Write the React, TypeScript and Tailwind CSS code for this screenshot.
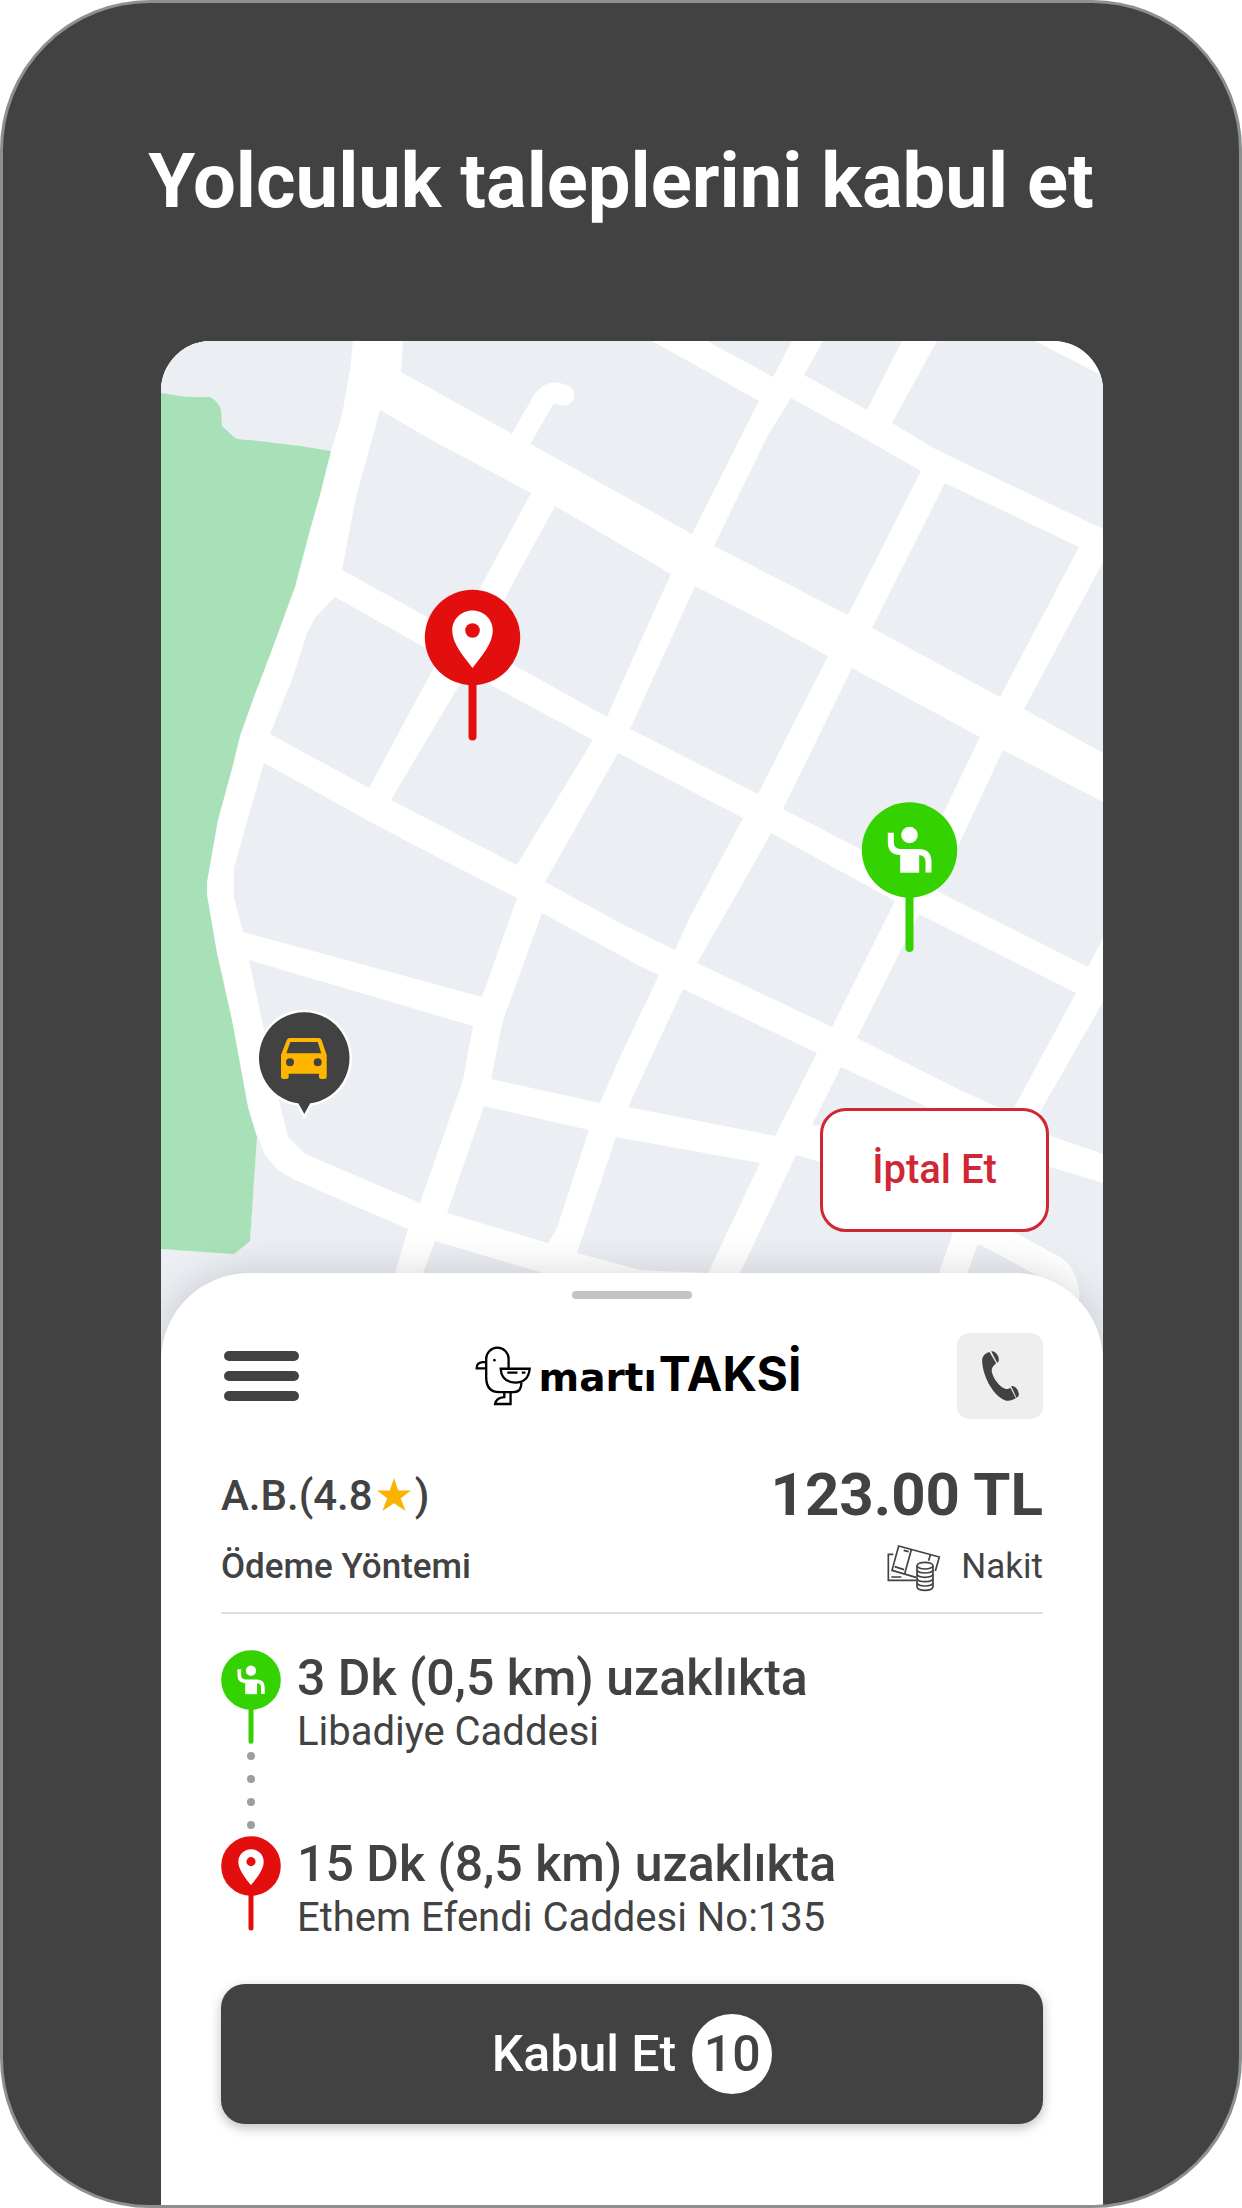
import { useState } from "react";

const BLOCKS = [
  "161,341 353,341 350,370 342,415 331,451 161,451",
  "403,341 401,372 640,505 692,534 759,401 652,341",
  "707,341 773,377 792,341",
  "823,341 804,375 867,410 902,341",
  "937,341 892,423 937,450 1103,529 1103,376 1035,341",
  "791,398 867,440 921,471 848,615 714,546 767,437",
  "945,483 1079,547 1000,697 872,628",
  "1103,562 1024,709 1103,753",
  "380,410 437,443 531,493 456,633 342,570 356,497",
  "555,506 671,574 620,687 607,717 510,663 479,646",
  "695,586 767,623 828,656 758,794 630,729",
  "852,668 980,737 913,876 862,850 783,809",
  "1003,750 1103,802 1103,938 1088,967 937,891",
  "335,597 440,656 369,788 270,734 293,677 307,633 315,618",
  "467,672 593,740 532,840 517,865 391,800",
  "618,753 743,818 690,917 675,950 620,923 545,882 580,820",
  "771,833 895,901 832,1027 697,963 735,897",
  "919,914 1076,993 1014,1108 997,1107 960,1090 857,1038",
  "1103,1002 1040,1112 1048,1135 1103,1154",
  "264,763 367,820 410,843 517,898 482,997 243,932 234,898 234,868 248,818",
  "542,913 640,966 659,975 620,1057 600,1103 491,1079 503,1020",
  "683,989 817,1053 775,1136 628,1107",
  "841,1067 927,1107 1000,1140 812,1125",
  "249,960 473,1026 463,1080 420,1203 305,1154 288,1137 279,1100 264,1030",
  "484,1106 589,1130 557,1228 548,1243 447,1213",
  "616,1137 760,1163 708,1273 640,1270 577,1253",
  "796,1155 820,1162 1050,1167 1103,1183 1103,1381 690,1381 740,1273",
  "161,1240 250,1240 257,1135 265,1155 278,1170 295,1180 408,1229 395,1273 365,1381 161,1381",
  "435,1241 543,1273 600,1381 390,1381 423,1273",
];

const PersonGlyph = () => (
  <g>
    <circle cx="0" cy="-15" r="8.3" fill="#fff" />
    <path d="M-18.7 -17.3V-8Q-18.7 2 -9 2H9Q19 2 19 12V22.5" fill="none" stroke="#fff" strokeWidth="6" />
    <path d="M-9.3 0H9.7V22.7H-9.3Z" fill="#fff" />
  </g>
);

const PlaceGlyph = () => (
  <g>
    <path
      d="M0 -27C-11.5 -27 -20.3 -18 -20.3 -7C-20.3 6 -9 19 0 30.5C9 19 20.3 6 20.3 -7C20.3 -18 11.5 -27 0 -27Z"
      fill="#fff"
    />
    <circle cx="0" cy="-7" r="7.3" fill="#e30f0f" />
  </g>
);

const PickupPin = () => (
  <g>
    <path d="M0 40V98" stroke="#33d200" strokeWidth="8" strokeLinecap="round" />
    <circle r="47.7" fill="#33d200" />
    <PersonGlyph />
  </g>
);

const DropoffPin = () => (
  <g>
    <path d="M0 40V99" stroke="#e30f0f" strokeWidth="8" strokeLinecap="round" />
    <circle r="47.7" fill="#e30f0f" />
    <PlaceGlyph />
  </g>
);

const CarPin = () => (
  <g>
    <path
      d="M-6.5 46.5A46.5 47 0 1 1 7 46.5L0.3 58.5Z"
      fill="#424242"
      stroke="#fff"
      strokeWidth="2.5"
    />
    <path
      fillRule="evenodd"
      fill="#ffb600"
      d="M-14 -20H14.7Q16.8 -20 17.6 -18L22.7 -3V18.5Q22.7 21 20 21H17.5Q15 21 15 18.5V15.7H-15.3V18.5Q-15.3 21 -18 21H-20.3Q-23 21 -23 18.5V-3L-17.2 -18Q-16.4 -20 -14 -20ZM-13.7 -16L-17.7 -4.7H17.3L13.7 -16ZM-14 0.3A4 4 0 1 0 -14 8.3A4 4 0 1 0 -14 0.3ZM13.7 0.3A4 4 0 1 0 13.7 8.3A4 4 0 1 0 13.7 0.3Z"
    />
  </g>
);

const CityMap = () => (
  <svg viewBox="161 341 942 1040" className="block w-full" aria-hidden="true">
    <path d="M161 341H1103V1381H161Z" fill="#fff" />
    {BLOCKS.map((points) => (
      <polygon key={points} points={points} fill="#ebeef3" />
    ))}
    <path
      d="M161 393L187 397H210Q220 403 221 410L222 426L235 438Q240 440 250 440L300 446L331 451L320 495L310 530L295 587L270 655L255 694L240 736L233 765L218 820L207 882V895L217 953L232 1020L248 1107L257 1137L250 1241L234 1254L161 1249Z"
      fill="#a8e1b8"
    />
    <g fill="none" stroke="#fff" strokeLinecap="round" strokeLinejoin="round">
      <path d="M520 441L541 404Q547 393 556 393L564 395" strokeWidth="21" />
      <path d="M944 1300L968 1230L985 1232L1052 1268Q1064 1275 1066 1295" strokeWidth="27" />
    </g>
    <g transform="translate(472.5 637.5)">
      <DropoffPin />
    </g>
    <g transform="translate(909.5 850)">
      <PickupPin />
    </g>
    <g transform="translate(304 1058)">
      <CarPin />
    </g>
  </svg>
);

const BirdLogo = () => (
  <svg viewBox="94 74 170 180" className="h-[60px] w-[56px]" fill="none" stroke="#000" strokeWidth="7" aria-hidden="true">
    <path d="M196 142V112A34 34 0 0 0 128 112V172Q130 213 168 213H212Q235 213 235 184" />
    <path d="M128 122H117Q98 124 99 141H128" />
    <path d="M172 142H260Q256 184 216 184Q174 182 172 142Z" />
    <path d="M192 154H223M236 154H247" />
    <path d="M183 213V228Q158 230 155 249H202V213" />
    <circle cx="153" cy="116" r="4" fill="#000" stroke="none" />
  </svg>
);

const HandsetIcon = () => (
  <svg viewBox="424 90 116 156" className="h-[52px] w-[39px]" fill="#424242" aria-hidden="true">
    <path d="M449 96C436 100 427 108 427 122C428 164 456 222 492 239C504 245 514 243 528 235L512 204C506 206 502 209 496 206C478 200 461 176 456 156C454 146 458 140 469 130Z" />
    <path d="M454 94C465 91 478 106 477 120C477 124 475 127 472 128Z" />
    <path d="M514 199C523 193 536 208 537 223C537 229 534 232 530 233Z" />
  </svg>
);

const CashIcon = () => (
  <svg viewBox="143 668 162 144" className="h-[48px] w-[54px]" fill="none" stroke="#424242" strokeWidth="5" aria-hidden="true">
    <path d="M162 699H147V777H230" />
    <path d="M156 767H186M166 736L194 745M193 687L208 691" />
    <path d="M230 768L158 747L178 674L300 707L288 749" />
    <path d="M216 685L196 757M273 700L268 718" />
    <ellipse cx="257" cy="733" rx="24" ry="10" />
    <path d="M233 733V797Q236 807 257 807T281 797V733" />
    <path d="M233 746Q236 755 257 755T281 746M233 759Q236 768 257 768T281 759M233 772Q236 781 257 781T281 772M233 785Q236 794 257 794T281 785" />
  </svg>
);

const StarIcon = () => (
  <svg viewBox="0 0 34 35" className="mx-[4px] h-[35px] w-[34px]" fill="#fab400" aria-hidden="true">
    <path d="M17 0L21.2 12.4H34L23.8 20.2L28.6 33L17 25.2L5.4 33L10.2 20.2L0 12.4H12.8Z" />
  </svg>
);

const stops = [
  { kind: "pickup", title: "3 Dk (0,5 km) uzaklıkta", address: "Libadiye Caddesi" },
  { kind: "dropoff", title: "15 Dk (8,5 km) uzaklıkta", address: "Ethem Efendi Caddesi No:135" },
];

export default function App() {
  const [accepted, setAccepted] = useState(false);

  return (
    <main className="flex min-h-screen flex-col overflow-hidden rounded-[150px] border-[3px] border-[#8b9191] bg-[#424242] font-['Roboto',sans-serif] text-[#424242]">
      <h1 className="pt-[134px] text-center text-[76px] leading-[88px] font-bold text-white">
        Yolculuk taleplerini kabul et
      </h1>

      <div className="mt-[116px] mr-[136px] ml-[158px] flex flex-1 flex-col overflow-hidden rounded-t-[50px] bg-white">
        <div className="relative">
          <CityMap />
          <button
            type="button"
            className="absolute right-[54px] bottom-[149px] h-[124px] w-[229px] rounded-[26px] border-[3px] border-[#cf2734] bg-white text-[40px] font-medium text-[#cf2734]"
          >
            İptal Et
          </button>
        </div>

        <section className="relative -mt-[108px] flex flex-1 flex-col rounded-t-[88px] bg-white px-[60px] pt-[18px] pb-[60px] shadow-[0_0_40px_rgba(0,0,0,0.16)]">
          <div className="mx-auto h-[8px] w-[120px] rounded-full bg-[#c3c3c3]" />

          <header className="mt-[34px] flex items-center justify-between">
            <button type="button" aria-label="Menü" className="flex w-[86px] flex-col gap-[10px] pr-[8px] pl-[3px]">
              <span className="h-[10px] rounded-full bg-[#424242]" />
              <span className="h-[10px] rounded-full bg-[#424242]" />
              <span className="h-[10px] rounded-full bg-[#424242]" />
            </button>
            <div className="ml-[12px] flex items-center gap-[8px] text-black">
              <BirdLogo />
              <p className="flex items-baseline gap-[2px]">
                <span className="font-['DejaVu_Sans',sans-serif] text-[39px] leading-[56px] font-bold">martı</span>
                <span className="font-['Inter',sans-serif] text-[48px] leading-[56px] font-bold">TAKSİ</span>
              </p>
            </div>
            <button
              type="button"
              aria-label="Ara"
              className="flex size-[86px] items-center justify-center rounded-[12px] bg-[#eeeeee]"
            >
              <HandsetIcon />
            </button>
          </header>

          <div className="mt-[40px] flex h-[72px] items-center justify-between">
            <p className="flex items-center text-[42px] font-medium">
              A.B.(4.8
              <StarIcon />)
            </p>
            <p className="text-[60px] leading-[72px] font-bold">123.00 TL</p>
          </div>

          <div className="flex h-[83px] items-center justify-between border-b-2 border-[#dddddd] pb-[8px] text-[35px]">
            <p className="font-medium">Ödeme Yöntemi</p>
            <p className="flex items-center gap-[20px]">
              <CashIcon />
              Nakit
            </p>
          </div>

          <ol className="mt-[36px]">
            {stops.map((stop) => (
              <li key={stop.kind} className="flex gap-[16px]">
                <div className="flex w-[60px] flex-col items-center">
                  <svg viewBox="-48 -48 96 152" className="h-[95px] w-[60px]" aria-hidden="true">
                    {stop.kind === "pickup" ? <PickupPin /> : <DropoffPin />}
                  </svg>
                  {stop.kind === "pickup" && (
                    <div className="flex h-[91px] flex-col gap-[15px] pt-[7px]">
                      <span className="size-[8px] rounded-full bg-[#9e9e9e]" />
                      <span className="size-[8px] rounded-full bg-[#9e9e9e]" />
                      <span className="size-[8px] rounded-full bg-[#9e9e9e]" />
                      <span className="size-[8px] rounded-full bg-[#9e9e9e]" />
                    </div>
                  )}
                </div>
                <div className="flex flex-col gap-[2px]">
                  <h2 className="text-[50px] leading-[56px] font-medium">{stop.title}</h2>
                  <p className="text-[40px] leading-[48px]">{stop.address}</p>
                </div>
              </li>
            ))}
          </ol>

          <button
            type="button"
            aria-pressed={accepted}
            onClick={() => setAccepted(!accepted)}
            className="mt-[42px] flex h-[140px] items-center justify-center gap-[16px] rounded-[24px] bg-[#424242] text-[50px] font-medium text-white shadow-[0_4px_12px_rgba(0,0,0,0.25)]"
          >
            Kabul Et
            <span className="flex size-[80px] items-center justify-center rounded-full bg-white text-[#424242]">10</span>
          </button>
        </section>
      </div>
    </main>
  );
}
